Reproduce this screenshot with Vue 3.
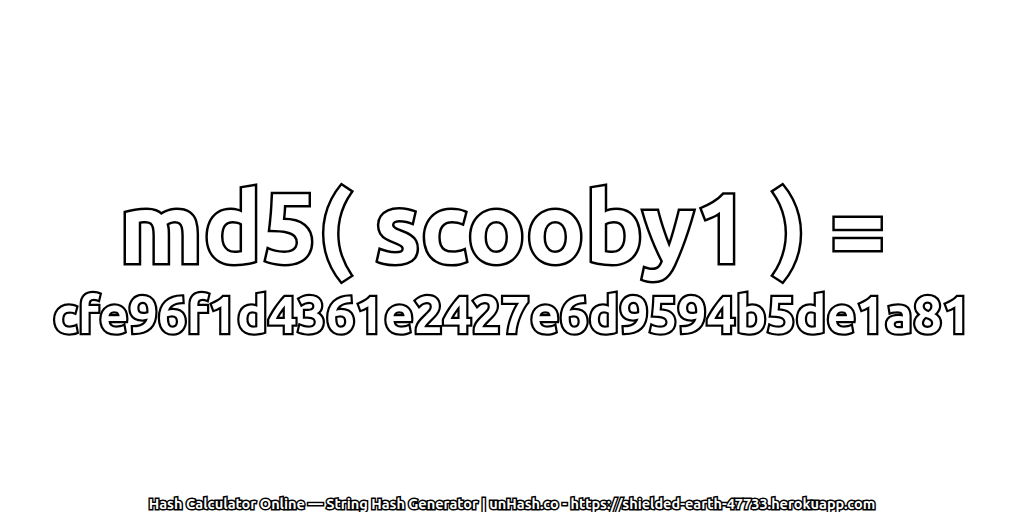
<script setup>
const title = 'md5( scooby1 ) ='
const hash = 'cfe96f1d4361e2427e6d9594b5de1a81'
const footer = 'Hash Calculator Online — String Hash Generator | unHash.co - https://shielded-earth-47733.herokuapp.com'
</script>

<template>
  <div class="page">
    <div class="center">
      <div class="title">{{ title }}</div>
      <div class="hash">{{ hash }}</div>
    </div>
    <div class="footer">{{ footer }}</div>
  </div>
</template>

<style scoped>
.page {
  width: 1024px;
  height: 512px;
  background: #fff;
  display: flex;
  flex-direction: column;
  font-family: "Ubuntu", "Noto Sans", "DejaVu Sans", sans-serif;
  overflow: hidden;
}

.center {
  flex: 1;
  display: flex;
  flex-direction: column;
  align-items: center;
  justify-content: center;
  padding-top: 26px;
}

.title {
  font-size: 98px;
  font-weight: 700;
  line-height: 100px;
  margin-bottom: 5px;
  padding-right: 20px;
  color: #fff;
  -webkit-text-stroke: 5px #000;
  paint-order: stroke fill;
  white-space: nowrap;
}

.hash {
  font-size: 51.5px;
  font-weight: 700;
  line-height: 64px;
  color: #fff;
  -webkit-text-stroke: 4.5px #000;
  paint-order: stroke fill;
  white-space: nowrap;
}

.footer {
  text-align: center;
  font-size: 14.5px;
  font-weight: 700;
  line-height: 16px;
  color: #fff;
  -webkit-text-stroke: 3px #000;
  paint-order: stroke fill;
  white-space: nowrap;
}
</style>
